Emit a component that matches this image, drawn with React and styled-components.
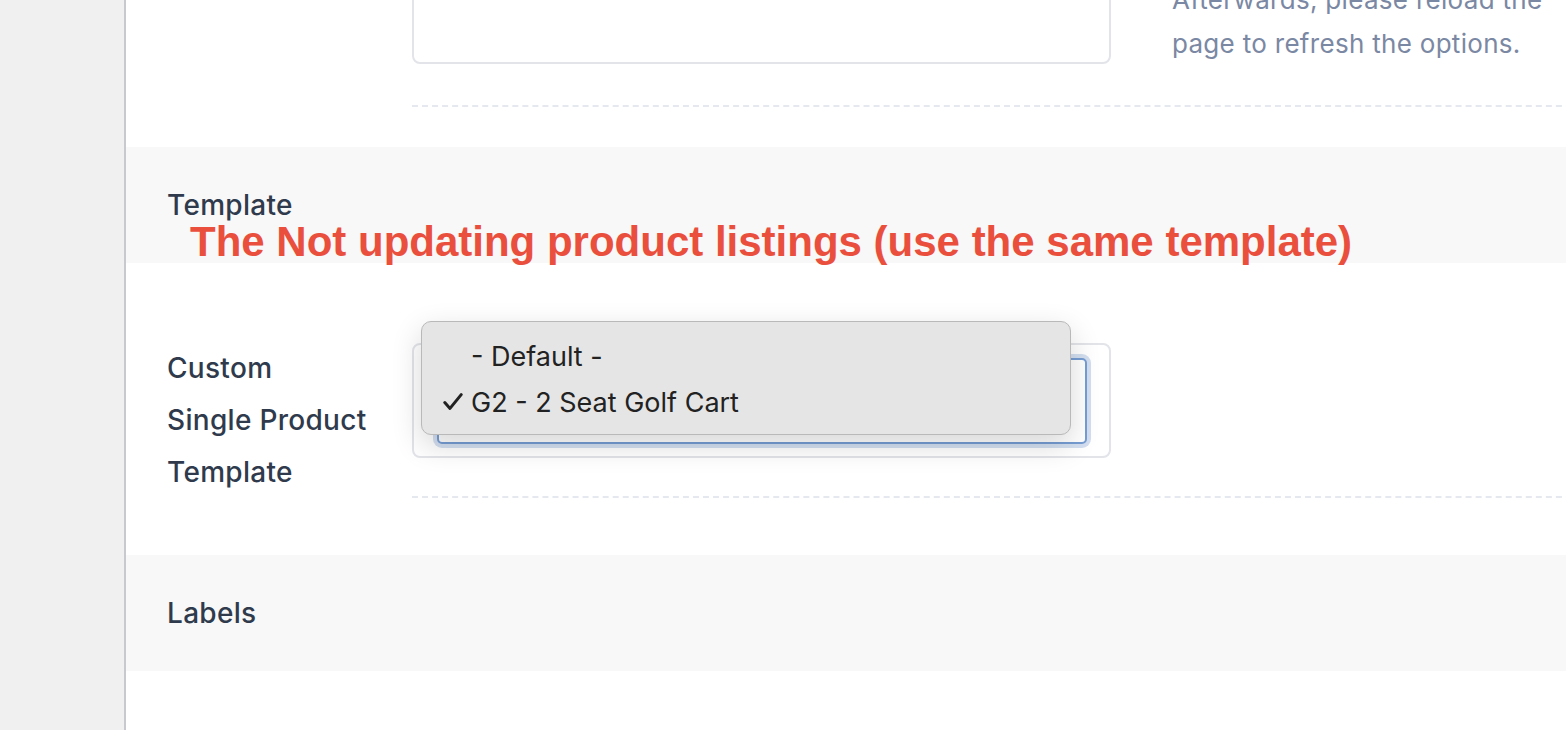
import React from 'react';
import styled, { createGlobalStyle } from 'styled-components';

const GlobalStyle = createGlobalStyle`
  html, body {
    margin: 0;
    padding: 0;
    background: #fff;
  }
  body {
    overflow: hidden;
    font-family: Inter, 'Liberation Sans', sans-serif;
  }
`;

function CheckMark () {
  return (
    <svg width="20" height="18" viewBox="0 0 20 18">
      <path d="M1.8 9.6 L7 15.4 L18.2 1.6" fill="none" stroke="#222" strokeWidth="3" strokeLinecap="round" strokeLinejoin="round" />
    </svg>
  );
}

function App () {
  return (
    <>
      <GlobalStyle />
      <Page>
        <Sidebar />
        <Main>
          <FieldRow $after={40}>
            <LabelCol />
            <FieldArea $pad={39}>
              <TextArea />
              <Help>
                Select the custom field that holds<br />
                the option values for this setting.<br />
                Afterwards, please reload the<br />
                page to refresh the options.
              </Help>
            </FieldArea>
          </FieldRow>

          <Band>
            <BandTitle>Template</BandTitle>
            <Annotation>The Not updating product listings (use the same template)</Annotation>
          </Band>

          <FieldRow $top={79} $after={57}>
            <LabelCol>
              <Label>Custom<br />Single Product<br />Template</Label>
            </LabelCol>
            <FieldArea $pad={0}>
              <SelectWrap>
                <SelectBox />
                <Popup>
                  <Option>
                    <Check />
                    - Default -
                  </Option>
                  <Option>
                    <Check><CheckMark /></Check>
                    G2 - 2 Seat Golf Cart
                  </Option>
                </Popup>
              </SelectWrap>
            </FieldArea>
          </FieldRow>

          <Band>
            <BandTitle>Labels</BandTitle>
          </Band>
        </Main>
      </Page>
    </>
  );
}

export default App;

const Page = styled.div`
  display: flex;
  height: 730px;
  overflow: hidden;
`;

const Sidebar = styled.div`
  width: 124px;
  flex-shrink: 0;
  background: #f0f0f0;
  border-right: 2px solid #c8c8cf;
`;

const Main = styled.div`
  flex: 1;
  margin-top: -110px;
`;

const FieldRow = styled.div`
  display: flex;
  padding: ${p => p.$top || 0}px 0 0 41px;
  margin-bottom: ${p => p.$after}px;
`;

const LabelCol = styled.div`
  width: 245px;
  flex-shrink: 0;
`;

const Label = styled.div`
  font-family: Inter, 'Liberation Sans', sans-serif;
  font-weight: 500;
  font-size: 28px;
  letter-spacing: 0.3px;
  line-height: 52px;
  color: #2f3b4c;
`;

const FieldArea = styled.div`
  flex: 1;
  display: flex;
  gap: 61px;
  padding-bottom: ${p => p.$pad}px;
  border-bottom: 2px dashed #e6e8ef;
`;

const TextArea = styled.div`
  width: 699px;
  height: 174px;
  box-sizing: border-box;
  border: 2px solid #e2e4e9;
  border-radius: 8px;
  flex-shrink: 0;
`;

const Help = styled.div`
  font-size: 26px;
  letter-spacing: 0.3px;
  line-height: 44px;
  color: #7b88a3;
  white-space: nowrap;
`;

const Band = styled.div`
  position: relative;
  height: 116px;
  background: #f8f8f8;
  display: flex;
  align-items: center;
  padding-left: 41px;
`;

const BandTitle = styled.div`
  font-weight: 500;
  font-size: 28px;
  letter-spacing: 0.3px;
  color: #2f3b4c;
`;

const Annotation = styled.div`
  position: absolute;
  left: 64px;
  top: 74px;
  font-family: 'Liberation Sans', Arial, sans-serif;
  font-weight: 700;
  font-size: 42px;
  line-height: 42px;
  color: #ea4f3d;
  white-space: nowrap;
`;

const SelectWrap = styled.div`
  position: relative;
  margin-top: 1px;
  width: 699px;
  height: 115px;
  box-sizing: border-box;
  border: 2px solid #e2e4e9;
  border-radius: 8px;
  padding: 13px 23px 0 23px;
`;

const SelectBox = styled.div`
  width: 650px;
  height: 86px;
  box-sizing: border-box;
  border: 2px solid #769dd3;
  border-radius: 5px;
  box-shadow: 0 0 0 4px #d3dff0;
  background: #fff;
`;

const Popup = styled.div`
  position: absolute;
  left: 7px;
  top: -24px;
  width: 650px;
  box-sizing: border-box;
  padding: 11px 0 9px;
  background: #e5e5e5;
  border: 1px solid #b9b9b9;
  border-radius: 10px;
  box-shadow: 0 10px 30px rgba(0, 0, 0, 0.16);
`;

const Option = styled.div`
  display: flex;
  align-items: center;
  height: 46px;
  padding-left: 20px;
  font-family: Inter, 'Liberation Sans', sans-serif;
  font-size: 27px;
  color: #222;
`;

const Check = styled.span`
  display: flex;
  align-items: center;
  width: 29px;
  padding-left: 1px;
  box-sizing: border-box;
`;
